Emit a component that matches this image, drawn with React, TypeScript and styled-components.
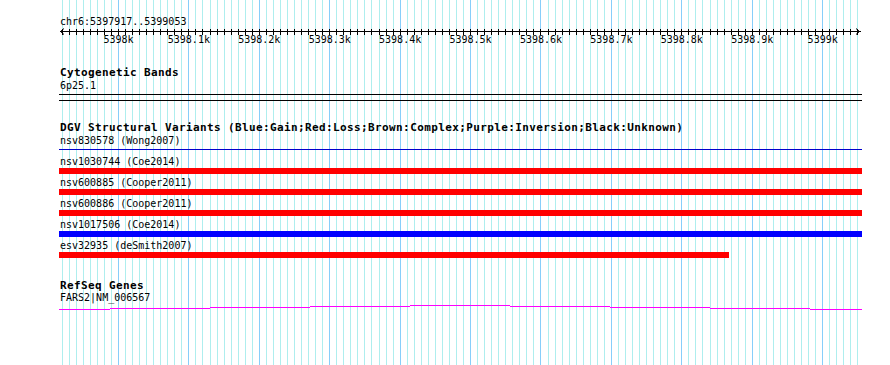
import React from 'react';
import styled, { createGlobalStyle } from 'styled-components';

const START = 5397917;
const END = 5399053;
const LEFT = 60;
const SPAN = 800;
const W = 890;
const H = 365;
const toX = (bp: number) => LEFT + ((bp - START) * SPAN) / (END - START);

const Global = createGlobalStyle`
  html, body { margin: 0; padding: 0; background: #ffffff; }
`;

const Panel = styled.div`
  position: relative;
  width: ${W}px;
  height: ${H}px;
  background: #ffffff;
  overflow: hidden;
  font-family: "DejaVu Sans Mono", "Liberation Mono", monospace;
  color: #000;
`;

const GridLayer = styled.svg`
  position: absolute;
  left: 0;
  top: 0;
  z-index: 0;
`;

const Content = styled.div`
  position: relative;
  z-index: 1;
  display: flex;
  flex-direction: column;
  width: ${W}px;
`;

const Section = styled.section<{ $top: number }>`
  display: flex;
  flex-direction: column;
  margin-top: ${(p) => p.$top}px;
`;

const TrackTitle = styled.div<{ $lh?: number }>`
  margin-left: ${LEFT}px;
  font-size: 11px;
  font-weight: bold;
  letter-spacing: 0.38px;
  line-height: ${(p) => p.$lh ?? 13}px;
  height: ${(p) => p.$lh ?? 13}px;
  white-space: nowrap;
`;

const FeatureLabel = styled.div`
  margin-left: ${LEFT}px;
  font-size: 10px;
  line-height: 13px;
  height: 13px;
  white-space: nowrap;
`;

const RulerSvg = styled.svg`
  display: block;
`;

const Band = styled.div`
  margin-left: 59px;
  margin-top: 2px;
  width: 803px;
  height: 7px;
  box-sizing: border-box;
  border-top: 1px solid #000;
  border-bottom: 1px solid #000;
`;

const BarLane = styled.div`
  margin-left: 59px;
  height: 8px;
  display: flex;
  flex-direction: column;
`;

const Bar = styled.div<{ $color: string; $thin?: boolean }>`
  background: ${(p) => p.$color};
  height: ${(p) => (p.$thin ? 1 : 6)}px;
  margin-top: ${(p) => (p.$thin ? 2 : 0)}px;
`;

const GeneSvg = styled.svg`
  display: block;
`;

type Variant = { name: string; color: string; width: number; thin?: boolean };

const variants: Variant[] = [
  { name: 'nsv830578 (Wong2007)', color: '#0000cc', width: 803, thin: true },
  { name: 'nsv1030744 (Coe2014)', color: '#ff0000', width: 803 },
  { name: 'nsv600885 (Cooper2011)', color: '#ff0000', width: 803 },
  { name: 'nsv600886 (Cooper2011)', color: '#ff0000', width: 803 },
  { name: 'nsv1017506 (Coe2014)', color: '#0000ff', width: 803 },
  { name: 'esv32935 (deSmith2007)', color: '#ff0000', width: 670 },
];

const Grid = () => {
  const minor: number[] = [];
  const major: number[] = [];
  for (let bp = 5397920; bp <= END; bp += 10) {
    const x = Math.floor(toX(bp)) + 0.5;
    if (bp % 100 === 0) major.push(x);
    else minor.push(x);
  }
  return (
    <GridLayer width={W} height={H} viewBox={`0 0 ${W} ${H}`} shapeRendering="crispEdges">
      {minor.map((x) => (
        <line key={`n${x}`} x1={x} x2={x} y1={0} y2={H} stroke="#aeeeee" />
      ))}
      {major.map((x) => (
        <line key={`j${x}`} x1={x} x2={x} y1={0} y2={H} stroke="#87cefa" />
      ))}
    </GridLayer>
  );
};

const rulerLabels = [
  [5398000, '5398k'],
  [5398100, '5398.1k'],
  [5398200, '5398.2k'],
  [5398300, '5398.3k'],
  [5398400, '5398.4k'],
  [5398500, '5398.5k'],
  [5398600, '5398.6k'],
  [5398700, '5398.7k'],
  [5398800, '5398.8k'],
  [5398900, '5398.9k'],
  [5399000, '5399k'],
] as const;

const Ruler = () => {
  const ticks: number[] = [];
  for (let bp = 5397920; bp <= END; bp += 10) ticks.push(Math.floor(toX(bp)) + 0.5);
  return (
    <RulerSvg width={W} height={20} viewBox={`0 0 ${W} 20`}>
      <g shapeRendering="crispEdges" stroke="#000">
        <line x1={60} x2={861} y1={3.5} y2={3.5} />
        {ticks.map((x) => (
          <line key={x} x1={x} x2={x} y1={1} y2={7} />
        ))}
      </g>
      <polyline points="64,0.5 60.5,3.5 64,6.5" fill="none" stroke="#000" />
      <polyline points="856,0.5 859.5,3.5 856,6.5" fill="none" stroke="#000" />
      {rulerLabels.map(([bp, t]) => (
        <text
          key={t}
          x={toX(bp)}
          y={15}
          textAnchor="middle"
          fontSize={10}
          fontFamily='"DejaVu Sans Mono", monospace'
          fill="#000"
        >
          {t}
        </text>
      ))}
    </RulerSvg>
  );
};

const genePath =
  'M59 309.5 H110 M110 308.5 H210 M210 307.5 H310 M310 306.5 H410 M410 305.5 H510 M510 306.5 H610 M610 307.5 H710 M710 308.5 H810 M810 309.5 H862';

const GeneLine = () => (
  <GeneSvg width={W} height={8} viewBox={`0 304 ${W} 8`} shapeRendering="crispEdges">
    <path d={genePath} stroke="#ff00ff" strokeWidth={1} fill="none" />
  </GeneSvg>
);

export default function App() {
  return (
    <>
      <Global />
      <Panel>
        <Grid />
        <Content>
          <Section $top={15}>
            <FeatureLabel>chr6:5397917..5399053</FeatureLabel>
            <Ruler />
          </Section>

          <Section $top={19}>
            <TrackTitle $lh={12}>Cytogenetic Bands</TrackTitle>
            <FeatureLabel>6p25.1</FeatureLabel>
            <Band />
          </Section>

          <Section $top={20}>
            <TrackTitle>
              DGV Structural Variants (Blue:Gain;Red:Loss;Brown:Complex;Purple:Inversion;Black:Unknown)
            </TrackTitle>
            {variants.map((v) => (
              <React.Fragment key={v.name}>
                <FeatureLabel>{v.name}</FeatureLabel>
                <BarLane>
                  <Bar $color={v.color} $thin={v.thin} style={{ width: v.width }} />
                </BarLane>
              </React.Fragment>
            ))}
          </Section>

          <Section $top={20}>
            <TrackTitle $lh={11}>RefSeq Genes</TrackTitle>
            <FeatureLabel>FARS2|NM_006567</FeatureLabel>
            <GeneLine />
          </Section>
        </Content>
      </Panel>
    </>
  );
}
